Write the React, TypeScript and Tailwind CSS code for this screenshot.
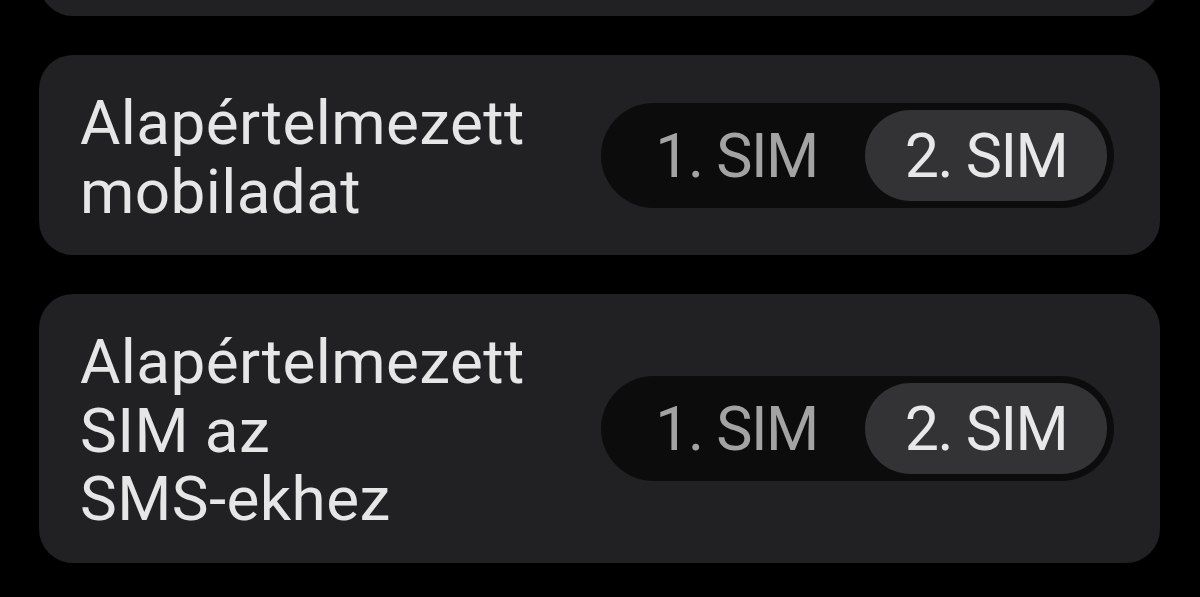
import React from "react";

interface SimRowProps {
    lines: string[];
    selected: 1 | 2;
}

function SimSelector({ selected }: { selected: 1 | 2 }) {
    return (
        <div className="flex h-[105px] w-[513px] shrink-0 items-stretch rounded-full bg-[#0c0c0c] p-[7px] text-[61px] tracking-[-1.5px]">
            <div
                className={`flex flex-1 items-center justify-center rounded-full ${
                    selected === 1 ? "bg-[#333335] text-[#e8e8e8]" : "text-[#a3a3a3]"
                }`}
            >
                1. SIM
            </div>
            <div
                className={`flex w-[242px] items-center justify-center rounded-full ${
                    selected === 2 ? "bg-[#333335] text-[#e8e8e8]" : "text-[#a3a3a3]"
                }`}
            >
                2. SIM
            </div>
        </div>
    );
}

function SimRow({ lines, selected }: SimRowProps) {
    return (
        <div className="flex items-center justify-between rounded-[34px] bg-[#212123] pt-[30px] pb-[29px] pl-[41px] pr-[46px]">
            <div className="pt-[4px] text-[62px] leading-[68.5px] tracking-[0.4px] text-[#e6e6e6]">
                {lines.map((l) => (
                    <div key={l}>{l}</div>
                ))}
            </div>
            <SimSelector selected={selected} />
        </div>
    );
}

export default function App() {
    return (
        <div
            className="h-[597px] w-[1200px] overflow-hidden bg-black pl-[39px] pr-[40px] leading-[68px]"
            style={{ fontFamily: "Roboto, 'Noto Sans', sans-serif" }}
        >
            {/* previous card, only its bottom edge shows */}
            <div className="-mt-[104px] h-[120px] rounded-[34px] bg-[#212123]" />

            <div className="mt-[39px] flex flex-col gap-[39px]">
                <SimRow lines={["Alapértelmezett", "mobiladat"]} selected={2} />
                <SimRow lines={["Alapértelmezett", "SIM az", "SMS-ekhez"]} selected={2} />
            </div>
        </div>
    );
}
